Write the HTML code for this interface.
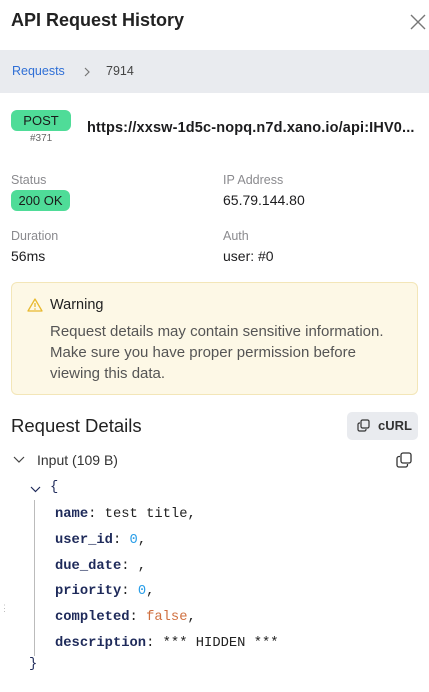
<!DOCTYPE html>
<html><head><meta charset="utf-8"><style>
*{margin:0;padding:0;box-sizing:border-box}
body{width:429px;height:692px;overflow:hidden;background:#fff;font-family:"Liberation Sans",sans-serif;color:#1c1c1e;position:relative}
.a{position:absolute;white-space:nowrap}
.lbl{font-size:12.5px;color:#8a8a8e}
.val{font-size:14px;color:#1c1c1e}
.pill{position:absolute;background:#4fdc98;border-radius:6px;font-size:13px;text-align:center;color:#1a1a1a}
.code{font-family:"Liberation Mono",monospace;font-size:13.8px;color:#222}
.k{color:#1e2a5a;font-weight:bold}
</style></head><body>
<div class="a" style="left:11px;top:10px;font-size:18px;font-weight:bold;color:#222">API Request History</div>
<svg class="a" style="left:410px;top:14px" width="16" height="16" viewBox="0 0 16 16"><path d="M1 1L15 15M15 1L1 15" stroke="#777" stroke-width="1.4" fill="none"/></svg>
<div class="a" style="left:0;top:50px;width:429px;height:43px;background:#e9ebef"></div>
<div class="a" style="left:12px;top:64px;font-size:12.5px;color:#2f6fd6">Requests</div>
<svg class="a" style="left:83px;top:66px" width="8" height="12" viewBox="0 0 8 12"><path d="M2 2L6 6L2 10" stroke="#777" stroke-width="1.2" fill="none"/></svg>
<div class="a" style="left:106px;top:64px;font-size:12.5px;color:#444">7914</div>
<div class="pill" style="left:11px;top:110px;width:60px;height:21px;line-height:21px">POST</div>
<div class="a" style="left:30px;top:133px;font-size:10px;color:#666">#371</div>
<div class="a" style="left:87px;top:120px;font-size:14.5px;font-weight:bold;color:#1c1c1e;letter-spacing:0.15px">https://xxsw-1d5c-nopq.n7d.xano.io/api:IHV0...</div>
<div class="a lbl" style="left:11px;top:173px">Status</div>
<div class="pill" style="left:11px;top:190px;width:59px;height:21px;line-height:21px">200 OK</div>
<div class="a lbl" style="left:223px;top:173px">IP Address</div>
<div class="a val" style="left:223px;top:192px">65.79.144.80</div>
<div class="a lbl" style="left:11px;top:229px">Duration</div>
<div class="a val" style="left:11px;top:248px">56ms</div>
<div class="a lbl" style="left:223px;top:229px">Auth</div>
<div class="a val" style="left:223px;top:248px">user: #0</div>
<div class="a" style="left:11px;top:282px;width:407px;height:113px;background:#fdf8e6;border:1px solid #f3e6b8;border-radius:6px"></div>
<svg class="a" style="left:27px;top:298px" width="16" height="14" viewBox="0 0 16 14"><path d="M8 1L15 13H1Z" stroke="#e8b92f" stroke-width="1.3" fill="none" stroke-linejoin="round"/><path d="M8 5V9" stroke="#e8b92f" stroke-width="1.3"/><circle cx="8" cy="11" r="0.8" fill="#e8b92f"/></svg>
<div class="a" style="left:50px;top:297px;font-size:14.5px;color:#222">Warning</div>
<div class="a" style="left:50px;top:321px;font-size:15px;line-height:21px;color:#555">Request details may contain sensitive information.<br>Make sure you have proper permission before<br>viewing this data.</div>
<div class="a" style="left:11px;top:415px;font-size:18.5px;color:#222">Request Details</div>
<div class="a" style="left:347px;top:412px;width:71px;height:28px;background:#e9ebef;border-radius:5px"></div>
<svg class="a" style="left:357px;top:419px" width="13" height="13" viewBox="0 0 13 13"><rect x="4" y="1" width="8" height="8" rx="1.5" stroke="#333" fill="none" stroke-width="1.2"/><path d="M3 4H2.5A1.5 1.5 0 0 0 1 5.5V10.5A1.5 1.5 0 0 0 2.5 12H7.5A1.5 1.5 0 0 0 9 10.5V10" stroke="#333" fill="none" stroke-width="1.2"/></svg>
<div class="a" style="left:378px;top:418px;font-size:13px;font-weight:bold;color:#333">cURL</div>
<svg class="a" style="left:13px;top:456px" width="12" height="8" viewBox="0 0 12 8"><path d="M1 1L6 6L11 1" stroke="#444" stroke-width="1.2" fill="none"/></svg>
<div class="a" style="left:37px;top:452px;font-size:14px;color:#333">Input (109 B)</div>
<svg class="a" style="left:396px;top:452px" width="16" height="16" viewBox="0 0 16 16"><rect x="5" y="1" width="10" height="10" rx="2" stroke="#333" fill="none" stroke-width="1.3"/><path d="M4 4.5H3A2 2 0 0 0 1 6.5V13A2 2 0 0 0 3 15H9.5A2 2 0 0 0 11.5 13V12" stroke="#333" fill="none" stroke-width="1.3"/></svg>
<svg class="a" style="left:30px;top:486px" width="11" height="7" viewBox="0 0 11 7"><path d="M1 1L5.5 5.5L10 1" stroke="#1e2a5a" stroke-width="1.2" fill="none"/></svg>
<div class="a code" style="left:50px;top:480px;color:#1e2a5a">{</div>
<div class="a" style="left:34px;top:500px;width:1px;height:156px;background:#bbb"></div>
<div class="a" style="left:0;top:603px;font-size:9px;color:#bbb">⋮</div>
<div class="a code" style="left:55px;top:502px;line-height:25.8px"><span class="k">name</span>: test title,<br><span class="k">user_id</span>: <span style="color:#2a9ee8">0</span>,<br><span class="k">due_date</span>: ,<br><span class="k">priority</span>: <span style="color:#2a9ee8">0</span>,<br><span class="k">completed</span>: <span style="color:#d07040">false</span>,<br><span class="k">description</span>: *** HIDDEN ***</div>
<div class="a code" style="left:29px;top:657px;color:#1e2a5a">}</div>
</body></html>
